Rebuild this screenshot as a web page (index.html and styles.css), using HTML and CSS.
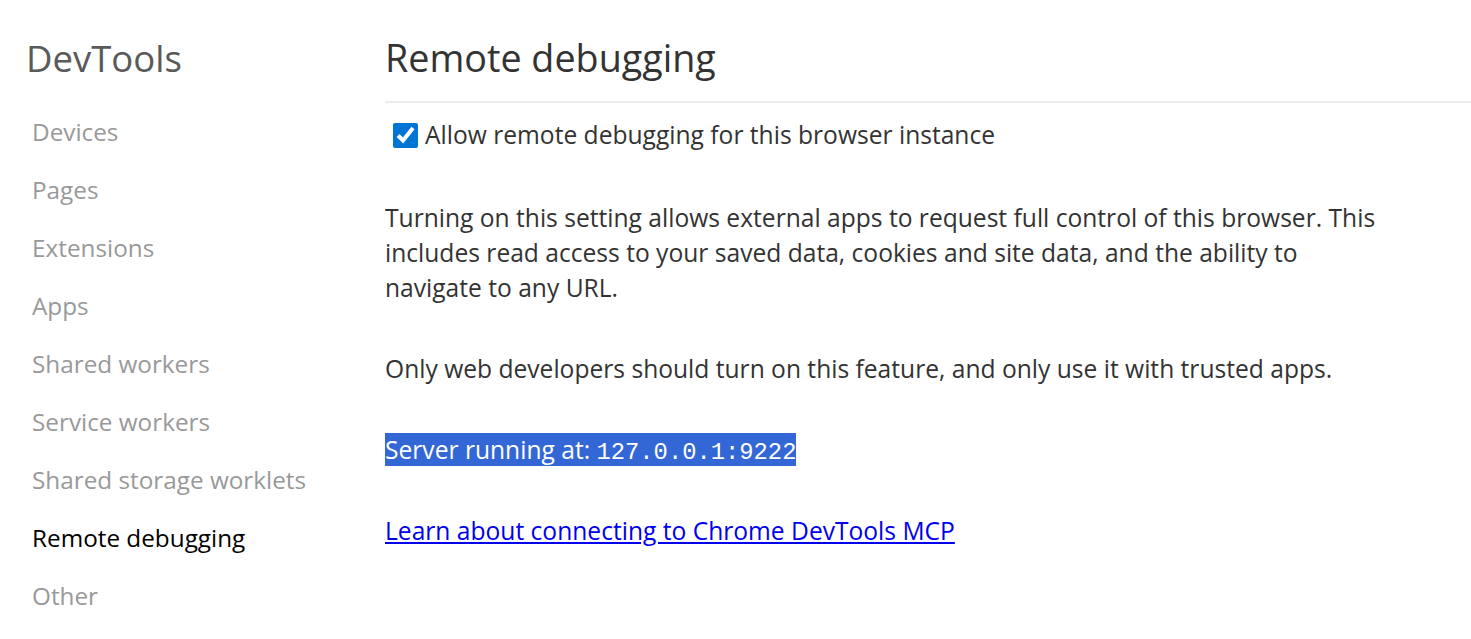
FILE: index.html
```html
<!DOCTYPE html>
<html>
<head>
<meta charset="utf-8">
<title>Inspect with Chrome Developer Tools</title>
<link rel="stylesheet" href="styles.css">
</head>
<body>
<div class="page">
  <nav class="sidebar">
    <h1 class="side-title">DevTools</h1>
    <ul class="nav-list">
      <li class="nav-item">Devices</li>
      <li class="nav-item">Pages</li>
      <li class="nav-item">Extensions</li>
      <li class="nav-item">Apps</li>
      <li class="nav-item">Shared workers</li>
      <li class="nav-item">Service workers</li>
      <li class="nav-item">Shared storage worklets</li>
      <li class="nav-item selected">Remote debugging</li>
      <li class="nav-item">Other</li>
    </ul>
  </nav>
  <main class="content">
    <header class="content-header">
      <h1 class="content-title">Remote debugging</h1>
    </header>
    <label class="check-row">
      <input type="checkbox" class="check" checked>
      <span>Allow remote debugging for this browser instance</span>
    </label>
    <p class="para">Turning on this setting allows external apps to request full control of this browser. This includes read access to your saved data, cookies and site data, and the ability to navigate to any URL.</p>
    <p class="para">Only web developers should turn on this feature, and only use it with trusted apps.</p>
    <p class="para server"><span class="sel">Server running at: <span class="mono">127.0.0.1:9222</span></span></p>
    <p class="para"><a class="link" href="#">Learn about connecting to Chrome DevTools MCP</a></p>
  </main>
</div>
</body>
</html>
```
FILE: styles.css
```css
html, body {
  margin: 0;
  padding: 0;
  background: #fff;
}
body {
  font-family: "Open Sans", "Noto Sans", "Liberation Sans", sans-serif;
  color: #333;
}
.page {
  display: flex;
  align-items: flex-start;
}
.sidebar {
  width: 385px;
  flex: none;
  padding-top: 38px;
  box-sizing: border-box;
}
.side-title {
  margin: 0 0 25px 26px;
  font-size: 36.5px;
  line-height: 40px;
  font-weight: 400;
  color: #5a5a5a;
}
.nav-list {
  list-style: none;
  margin: 0;
  padding: 0 0 0 32px;
}
.nav-item {
  font-size: 24.3px;
  line-height: 58px;
  color: #999;
}
.nav-item.selected {
  color: #000;
}
.content {
  flex: 1;
  padding-top: 38px;
}
.content-header {
  border-bottom: 2px solid #ececec;
  padding-bottom: 23px;
}
.content-title {
  margin: 0;
  font-size: 37.7px;
  line-height: 40px;
  font-weight: 400;
  color: #333;
}
.check-row {
  display: flex;
  align-items: center;
  gap: 7px;
  margin-top: 14px;
  padding-left: 8px;
  font-size: 24.6px;
  line-height: 35px;
}
.check {
  width: 25px;
  height: 25px;
  margin: 1px 0 0 0;
  accent-color: #0075d4;
}
.para {
  margin: 46px 0 0 0;
  font-size: 24.6px;
  line-height: 35px;
  max-width: 1000px;
}
.check-row + .para {
  margin-top: 48px;
}
.server {
  height: 35px;
}
.sel {
  background: #3367d6;
  color: #fff;
}
.mono {
  font-family: "Liberation Mono", "DejaVu Sans Mono", monospace;
  font-size: 23.8px;
  line-height: 1;
}
.link {
  color: #0000ee;
  text-decoration: underline;
}
```
